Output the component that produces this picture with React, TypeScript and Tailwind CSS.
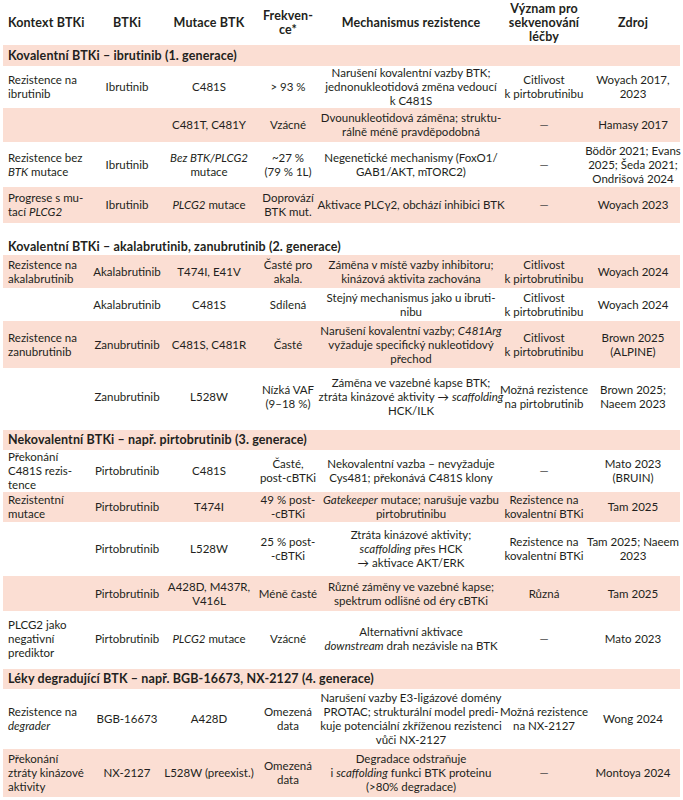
import type { ReactNode } from "react";

type Row = {
  cells: ReactNode[];
  pink?: boolean;
  h: string;
};

const cols = "grid grid-cols-[84px_80px_84px_74px_172px_94px_84px]";
const pinkBg = "bg-[#fbded3]";

const D = <span className="text-[#4a4a4a]">—</span>;

const rowsA: Row[] = [
  {
    h: "h-[42px]",
    cells: [
      <>Rezistence na<br />ibrutinib</>,
      "Ibrutinib",
      "C481S",
      "> 93 %",
      <>Narušení kovalentní vazby BTK;<br />jednonukleotidová změna vedoucí<br />k C481S</>,
      <>Citlivost<br />k pirtobrutinibu</>,
      <>Woyach 2017,<br />2023</>,
    ],
  },
  {
    h: "h-[34px]",
    pink: true,
    cells: [
      "",
      "",
      "C481T, C481Y",
      "Vzácné",
      <>Dvounukleotidová záměna; struktu-<br />rálně méně pravděpodobná</>,
      D,
      "Hamasy 2017",
    ],
  },
  {
    h: "h-[45px]",
    cells: [
      <>Rezistence bez<br /><i>BTK</i> mutace</>,
      "Ibrutinib",
      <><i>Bez BTK/PLCG2</i><br />mutace</>,
      <>~27 %<br />(79 % 1L)</>,
      <>Negenetické mechanismy (FoxO1/<br />GAB1/AKT, mTORC2)</>,
      D,
      <>Bödör 2021; Evans<br />2025; Šeda 2021;<br />Ondrišová 2024</>,
    ],
  },
  {
    h: "h-[36px]",
    pink: true,
    cells: [
      <>Progrese s mu-<br />tací <i>PLCG2</i></>,
      "Ibrutinib",
      <><i>PLCG2</i> mutace</>,
      <>Doprovází<br />BTK mut.</>,
      "Aktivace PLCγ2, obchází inhibici BTK",
      D,
      "Woyach 2023",
    ],
  },
];

const rowsB: Row[] = [
  {
    h: "h-[33px]",
    pink: true,
    cells: [
      <>Rezistence na<br />akalabrutinib</>,
      "Akalabrutinib",
      "T474I, E41V",
      <>Časté pro<br />akala.</>,
      <>Záměna v místě vazby inhibitoru;<br />kinázová aktivita zachována</>,
      <>Citlivost<br />k pirtobrutinibu</>,
      "Woyach 2024",
    ],
  },
  {
    h: "h-[33px]",
    cells: [
      "",
      "Akalabrutinib",
      "C481S",
      "Sdílená",
      <>Stejný mechanismus jako u ibruti-<br />nibu</>,
      <>Citlivost<br />k pirtobrutinibu</>,
      "Woyach 2024",
    ],
  },
  {
    h: "h-[47px]",
    pink: true,
    cells: [
      <>Rezistence na<br />zanubrutinib</>,
      "Zanubrutinib",
      "C481S, C481R",
      "Časté",
      <>Narušení kovalentní vazby; <i>C481Arg</i><br />vyžaduje specifický nukleotidový<br />přechod</>,
      <>Citlivost<br />k pirtobrutinibu</>,
      <>Brown 2025<br />(ALPINE)</>,
    ],
  },
  {
    h: "h-[57px]",
    cells: [
      "",
      "Zanubrutinib",
      "L528W",
      <>Nízká VAF<br />(9–18 %)</>,
      <>Záměna ve vazebné kapse BTK;<br />ztráta kinázové aktivity → <i>scaffolding</i><br />HCK/ILK</>,
      <>Možná rezistence<br />na pirtobrutinib</>,
      <>Brown 2025;<br />Naeem 2023</>,
    ],
  },
];

const rowsC: Row[] = [
  {
    h: "h-[42px]",
    cells: [
      <>Překonání<br />C481S rezis-<br />tence</>,
      "Pirtobrutinib",
      "C481S",
      <>Časté,<br />post-cBTKi</>,
      <>Nekovalentní vazba – nevyžaduje<br />Cys481; překonává C481S klony</>,
      D,
      <>Mato 2023<br />(BRUIN)</>,
    ],
  },
  {
    h: "h-[30px]",
    pink: true,
    cells: [
      <>Rezistentní<br />mutace</>,
      "Pirtobrutinib",
      "T474I",
      <>49 % post-<br />-cBTKi</>,
      <><i>Gatekeeper</i> mutace; narušuje vazbu<br />pirtobrutinibu</>,
      <>Rezistence na<br />kovalentní BTKi</>,
      "Tam 2025",
    ],
  },
  {
    h: "h-[54px]",
    cells: [
      "",
      "Pirtobrutinib",
      "L528W",
      <>25 % post-<br />-cBTKi</>,
      <>Ztráta kinázové aktivity;<br /><i>scaffolding</i> přes HCK<br />→ aktivace AKT/ERK</>,
      <>Rezistence na<br />kovalentní BTKi</>,
      <>Tam 2025; Naeem<br />2023</>,
    ],
  },
  {
    h: "h-[35px]",
    pink: true,
    cells: [
      "",
      "Pirtobrutinib",
      <>A428D, M437R,<br />V416L</>,
      "Méně časté",
      <>Různé záměny ve vazebné kapse;<br />spektrum odlišné od éry cBTKi</>,
      "Různá",
      "Tam 2025",
    ],
  },
  {
    h: "h-[56px]",
    cells: [
      <>PLCG2 jako<br />negativní<br />prediktor</>,
      "Pirtobrutinib",
      <><i>PLCG2</i> mutace</>,
      "Vzácné",
      <>Alternativní aktivace<br /><i>downstream</i> drah nezávisle na BTK</>,
      D,
      "Mato 2023",
    ],
  },
];

const rowsD: Row[] = [
  {
    h: "h-[60px]",
    cells: [
      <>Rezistence na<br /><i>degrader</i></>,
      "BGB-16673",
      "A428D",
      <>Omezená<br />data</>,
      <>Narušení vazby E3-ligázové domény<br />PROTAC; strukturální model predi-<br />kuje potenciální zkříženou rezistenci<br />vůči NX-2127</>,
      <>Možná rezistence<br />na NX-2127</>,
      "Wong 2024",
    ],
  },
  {
    h: "h-[48px]",
    pink: true,
    cells: [
      <>Překonání<br />ztráty kinázové<br />aktivity</>,
      "NX-2127",
      "L528W (preexist.)",
      <>Omezená<br />data</>,
      <>Degradace odstraňuje<br />i <i>scaffolding</i> funkci BTK proteinu<br />(&gt;80% degradace)</>,
      D,
      "Montoya 2024",
    ],
  },
];

const DataRow = ({ row }: { row: Row }) => (
  <div className={`${cols} items-center ${row.h} ${row.pink ? pinkBg : ""}`}>
    {row.cells.map((c, i) => (
      <div
        key={i}
        className={
          i === 0
            ? "pl-[5px] text-left whitespace-nowrap"
            : "flex justify-center text-center whitespace-nowrap"
        }
      >
        <div>{c}</div>
      </div>
    ))}
  </div>
);

const SectionHead = ({ title, cls }: { title: string; cls: string }) => (
  <div className={`flex pl-[5px] text-[12.5px] font-bold tracking-[0.01em] ${cls}`}>{title}</div>
);

export default function App() {
  return (
    <div className="min-h-[800px] w-[683px] overflow-hidden bg-white pl-[3px] pr-[3px] font-['Lato','Open_Sans',sans-serif] text-[11.5px] leading-[14px] text-[#231f20]">
      {/* Header */}
      <div className={`${cols} h-[45px] items-center text-[12.5px] font-bold tracking-[0.01em]`}>
        <div className="pl-[5px] whitespace-nowrap">Kontext BTKi</div>
        <div className="text-center">BTKi</div>
        <div className="text-center whitespace-nowrap">Mutace BTK</div>
        <div className="text-center">Frekven-<br />ce*</div>
        <div className="flex justify-center whitespace-nowrap">Mechanismus rezistence</div>
        <div className="text-center whitespace-nowrap">Význam pro<br />sekvenování<br />léčby</div>
        <div className="text-center">Zdroj</div>
      </div>

      <SectionHead
        title="Kovalentní BTKi – ibrutinib (1. generace)"
        cls={`h-[21px] items-center ${pinkBg}`}
      />
      {rowsA.map((r, i) => <DataRow key={i} row={r} />)}

      <SectionHead
        title="Kovalentní BTKi – akalabrutinib, zanubrutinib (2. generace)"
        cls="h-[32px] items-end pb-[1px]"
      />
      {rowsB.map((r, i) => <DataRow key={i} row={r} />)}

      <SectionHead
        title="Nekovalentní BTKi – např. pirtobrutinib (3. generace)"
        cls={`mt-[5px] h-[20px] items-center ${pinkBg}`}
      />
      {rowsC.map((r, i) => <DataRow key={i} row={r} />)}

      <SectionHead
        title="Léky degradující BTK – např. BGB-16673, NX-2127 (4. generace)"
        cls={`mt-[2px] h-[20px] items-center ${pinkBg}`}
      />
      {rowsD.map((r, i) => <DataRow key={i} row={r} />)}
    </div>
  );
}
